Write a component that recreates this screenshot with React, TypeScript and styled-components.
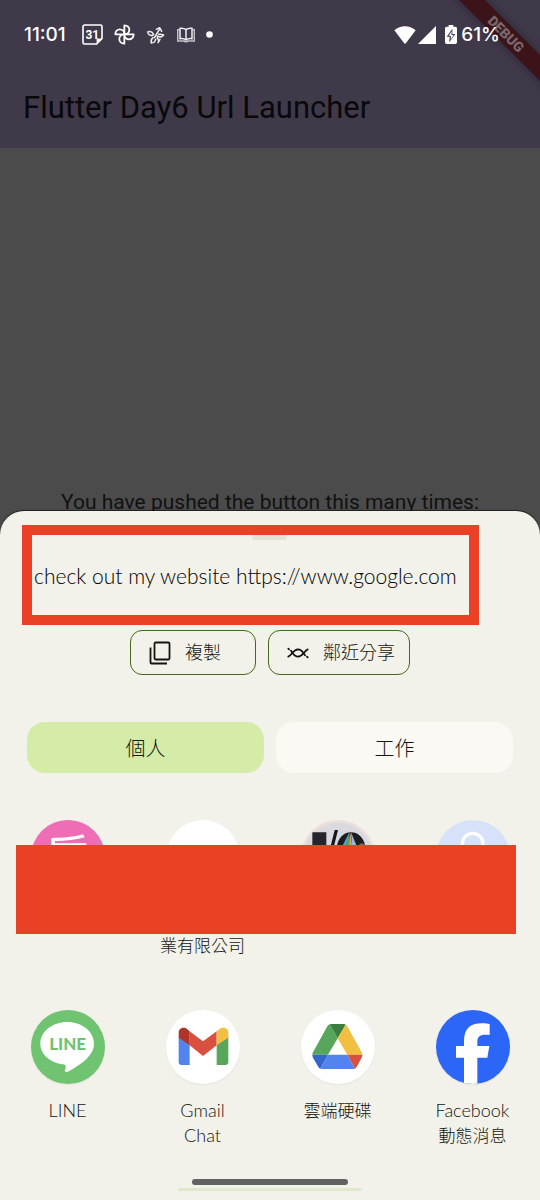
import React from "react";
import styled, { createGlobalStyle } from "styled-components";

const GlobalStyle = createGlobalStyle`
  * { box-sizing: border-box; }
  body {
    margin: 0;
    background: #f2f1ea;
    font-family: Lato, "Noto Sans CJK TC", sans-serif;
    color: #14150f;
  }
  button { font: inherit; color: inherit; border: 0; padding: 0; background: none; cursor: pointer; }
  svg { display: block; flex: none; }
`;

const RED = "#ea4026";

const Screen = styled.main`
  position: relative;
  display: flex;
  flex-direction: column;
  min-height: 100vh;
  overflow: hidden;
  background: #4b4b4b;
`;

const AppHeader = styled.header`
  background: #403949;
  padding-bottom: 21px;
  border-bottom: 1px solid #4b484e;
`;

const StatusBar = styled.div`
  position: relative;
  z-index: 2;
  display: flex;
  align-items: center;
  justify-content: space-between;
  height: 69px;
  padding: 0 40px 0 24px;
  color: #fff;
  font: 500 19px/24px Inter, sans-serif;
`;

const StatusGroup = styled.div<{ $gap: number }>`
  display: flex;
  align-items: center;
  gap: ${(p) => p.$gap}px;
`;

const Clock = styled.time`
  margin-right: 5px;
`;

const Title = styled.h1`
  margin: 0;
  padding: 19px 23px 0;
  font: 400 31px/39px Roboto, sans-serif;
  color: #09080a;
`;

const BannerCorner = styled.div`
  position: absolute;
  z-index: 1;
  top: 0;
  right: 0;
  width: 110px;
  height: 110px;
  overflow: hidden;
`;

const Banner = styled.div`
  position: absolute;
  top: 25px;
  right: -46px;
  width: 160px;
  height: 18px;
  transform: rotate(45deg);
  background: #3b1318;
  box-shadow: 0 0 10px rgba(20, 18, 40, 0.5);
  color: #77696b;
  font: 900 14px/18px Roboto, sans-serif;
  text-align: center;
`;

const AppBody = styled.section`
  display: flex;
  flex-direction: column;
  justify-content: flex-end;
  height: 387px;
  padding-bottom: 22px;
`;

const Counter = styled.p`
  margin: 0;
  text-align: center;
  white-space: nowrap;
  font: 400 21px/24px Roboto, sans-serif;
  color: #111;
`;

const Sheet = styled.section`
  position: relative;
  flex: 1;
  margin-top: -25px;
  padding-top: 14px;
  border-radius: 24px 24px 0 0;
  background: #f2f1ea;
  box-shadow: 0 -1px 1px rgba(0, 0, 0, 0.6);
  display: flex;
  flex-direction: column;
`;

const Handle = styled.div`
  position: absolute;
  top: 23px;
  left: 50%;
  width: 35px;
  height: 6px;
  margin-left: -18px;
  border-radius: 3px;
  background: #e3e4d6;
`;

const Message = styled.div`
  position: relative;
  display: flex;
  align-items: center;
  height: 100px;
  margin: 0 61px 0 22px;
  padding: 2px 0 0 2px;
  border: 10px solid ${RED};
  font-size: 21px;
  font-weight: 300;
  line-height: 26px;
  white-space: nowrap;
  color: #000;
`;

const Actions = styled.div`
  display: flex;
  justify-content: center;
  gap: 12px;
  margin-top: 5px;
`;

const ActionButton = styled.button`
  && {
    display: flex;
    align-items: center;
    gap: 14px;
    min-width: 126px;
    height: 45px;
    padding: 0 14px 0 18px;
    border: 1px solid #46661b;
    border-radius: 12px;
    font-size: 18px;
    line-height: 24px;
    font-weight: 300;
  }
`;

const ActionLabel = styled.span`
  padding-bottom: 2px;
`;

const Tabs = styled.div`
  display: grid;
  grid-template-columns: 1fr 1fr;
  gap: 12px;
  margin: 47px 27px 0;
`;

const Tab = styled.button<{ $active?: boolean }>`
  && {
    height: 51px;
    border-radius: 18px;
    background: ${(p) => (p.$active ? "#d5eca8" : "#faf9f4")};
    font-size: 20px;
    font-weight: 300;
  }
`;

const AppGrid = styled.div`
  position: relative;
  display: grid;
  grid-template-columns: repeat(4, 1fr);
  row-gap: 50px;
  margin-top: 47px;
`;

const AppButton = styled.button`
  && {
    display: flex;
    flex-direction: column;
    align-items: center;
    font-size: 17px;
    line-height: 25px;
    font-weight: 300;
    min-height: 140px;
  }
`;

const AppIcon = styled.span<{ $bg: string }>`
  width: 74px;
  height: 74px;
  margin-bottom: 14px;
  border-radius: 50%;
  overflow: hidden;
  background: ${(p) => p.$bg};
  box-shadow: 0 1px 2px rgba(0, 0, 0, 0.06);
`;

const AppName = styled.span`
  min-height: 25px;
  font-size: 18px;
`;

const CjkName = styled.span`
  min-height: 25px;
`;

const Redaction = styled.div`
  position: absolute;
  top: 25px;
  left: 16px;
  right: 24px;
  height: 89px;
  background: ${RED};
`;

const NavArea = styled.footer`
  display: flex;
  flex-direction: column;
  align-items: center;
  gap: 3px;
  margin-top: auto;
  padding-bottom: 9px;
`;

const NavPill = styled.div`
  width: 156px;
  height: 6px;
  border-radius: 3px;
  background: #636161;
`;

const NavLine = styled.div`
  width: 184px;
  height: 3px;
  border-radius: 2px;
  background: #e0e7cb;
`;

const CalendarIcon = () => (
  <svg width="21" height="21" viewBox="0 0 21 21" fill="none" stroke="#fff" strokeWidth="1.6">
    <path d="M2.6 1h15.8A1.6 1.6 0 0 1 20 2.6v12L14.6 20H2.6A1.6 1.6 0 0 1 1 18.4V2.600A1.600 1.600 0 0 1 2.600 1Z" />
    <path d="M20 14.600h-5.400V20Z" fill="#fff" stroke="none" />
    <text x="10.300" y="14.800" textAnchor="middle" fill="#fff" stroke="none" fontSize="12" fontWeight="700" fontFamily="Roboto, sans-serif">31</text>
  </svg>
);

const PhotosIcon = () => (
  <svg width="21" height="21" viewBox="0 0 63 63" fill="none" stroke="#fff" strokeWidth="5.500" strokeLinejoin="round">
    <path d="M31 31V4c20 0 20 27 0 27ZM31 31h28c0 20-28 20-28 0ZM31 31v28c-20 0-20-28 0-28ZM31 31H4c0-20 27-20 27 0Z" />
  </svg>
);

const SproutIcon = () => (
  <svg width="20" height="20" viewBox="0 0 60 60" fill="none" stroke="#eee" strokeWidth="4.500" strokeLinecap="round" strokeLinejoin="round">
    <path d="M25 38 41 12M31 13l10-5 6 11" />
    <path d="M5 21c7-3 14 0 18 7M5 21c1 8 8 12 16 10M38 28c6-1 10 0 15 2M53 30c-5 7-12 7-20 3" />
    <path d="M21 38c-5 4-7 9-5 16 8 0 12-5 13-12M34 38l5 11M42 43l-6 10" />
  </svg>
);

const BookIcon = () => (
  <svg width="18" height="16" viewBox="0 0 54 48" fill="none" stroke="#c4c1c9" strokeWidth="4.500">
    <path d="M7 8H2v34h20c1 3 9 3 10 0h20V8h-5" />
    <path d="M27 8C22 4 16 3 9 4v31c8-1 13 0 18 4 5-4 10-5 18-4V4c-7-1-13 0-18 4v31" stroke="#efeef0" />
  </svg>
);

const DotIcon = () => (
  <svg width="7" height="7" viewBox="0 0 7 7"><circle cx="3.500" cy="3.500" r="3.300" fill="#fff" /></svg>
);

const WifiIcon = () => (
  <svg width="22" height="18" viewBox="0 0 66 54" fill="#fff">
    <path d="M1 13C20-3 46-3 65 13L36 51q-3 4-6 0Z" />
  </svg>
);

const SignalIcon = () => (
  <svg width="18" height="18" viewBox="0 0 18 18" fill="#fff"><path d="M18 0v18H0Z" /></svg>
);

const BatteryIcon = () => (
  <svg width="12" height="19" viewBox="0 0 36 57">
    <path d="M11 0h14v5h6q5 0 5 5v42q0 5-5 5H5q-5 0-5-5V10q0-5 5-5h6Z" fill="#fff" />
    <path d="M22 11 5 35h9l-1 17 18-25h-9Z" fill="#403949" />
    <path d="M20 19 11 32h7l-1 12 9-14h-7Z" fill="#fff" />
  </svg>
);

const CopyIcon = () => (
  <svg width="22" height="24" viewBox="0 0 22 24" fill="none" stroke="#14150f" strokeWidth="1.800" strokeLinejoin="round">
    <rect x="5.500" y="1.500" width="15" height="17" rx="1.200" />
    <path d="M1.500 6.500v15a1 1 0 0 0 1 1h15.500" />
  </svg>
);

const NearbyIcon = () => (
  <svg width="22" height="12" viewBox="0 0 66 36" fill="none" stroke="#14150f" strokeWidth="5.500" strokeLinecap="round">
    <path d="M4 29C14 25 18 8 33 7c12 0 16 11 21 18M60 29l2 2" />
    <path d="M62 7C52 11 48 28 33 29c-12 0-16-11-21-18M4 5l2 2" />
  </svg>
);

const TrainLogo = () => (
  <svg width="74" height="74" viewBox="0 0 222 222" fill="#fff">
    <path d="M61 54C98 54 128 51 156 43l5 9c-28 8-56 11-89 11v7h94v10H61Z" />
  </svg>
);

const IoLogo = () => (
  <svg width="74" height="74" viewBox="0 0 222 222">
    <circle cx="111" cy="112" r="107" fill="#d9d9df" stroke="#ecdfdb" strokeWidth="6" />
    <path d="M34 37h42v90H34Z" fill="#25262c" />
    <path d="M101 30h10L91 110H81Z" fill="#151519" />
    <ellipse cx="150" cy="83" rx="42" ry="46" fill="#1c1d21" />
    <path d="M145 37 118 90h18Z" fill="#5e9bd6" />
    <path d="M146 37 129 90h18Z" fill="#55a063" />
    <path d="M148 37 143 90h12Z" fill="#d8a35d" />
    <path d="M150 37 154 90h18Z" fill="#8db9e8" />
    <path d="M176 72q12-8 18 10H172Z" fill="#9b5d4b" />
  </svg>
);

const PersonLogo = () => (
  <svg width="74" height="74" viewBox="0 0 222 222" fill="none" stroke="#fff" strokeWidth="10">
    <circle cx="110" cy="71" r="31" />
  </svg>
);

const LineLogo = () => (
  <svg width="74" height="74" viewBox="0 0 222 222">
    <path d="M109 36C64 36 28 65 28 101c0 33 30 57 68 62 8 1 9 4 8 10l-2 8c-1 6 3 6 8 4 32-17 79-45 79-84 0-36-36-65-80-65Z" fill="#fff" />
    <text x="110" y="120" textAnchor="middle" fontFamily="Lato, sans-serif" fontSize="51" fontWeight="900" fill="#70c371">LINE</text>
  </svg>
);

const GmailLogo = () => (
  <svg width="74" height="74" viewBox="0 0 222 222">
    <path d="M38 80 71 104v61H47q-9 0-9-9Z" fill="#5383ec" />
    <path d="M187 80 152 104v61h26q9 0 9-9Z" fill="#58a65c" />
    <path d="M71 64 111 94 152 64v42L111 138 71 106Z" fill="#d95040" />
    <path d="M38 83V68c0-14 16-19 26-10l7 6v42Z" fill="#b03428" />
    <path d="M187 83V68c0-14-16-19-27-10l-8 6v42Z" fill="#f1bf42" />
  </svg>
);

const DriveLogo = () => (
  <svg width="74" height="74" viewBox="0 0 222 222">
    <path d="M86 43 110 85 81 134H34q0-4 2-7L79 49q3-5 7-6Z" fill="#58a65c" />
    <path d="M86 43q2-1 6-1h36q4 0 6 2L110 85Z" fill="#3b7e40" />
    <path d="M134 44q3 2 5 5l43 78q2 3 2 7h-45L110 85Z" fill="#f1bf42" />
    <path d="M34 134h47L58 176q-4-1-6-5L36 143q-2-4-2-9Z" fill="#3267cb" />
    <path d="M81 134h58l23 42q-3 1-6 1H64q-3 0-6-1Z" fill="#5383ec" />
    <path d="M139 134h45q0 5-2 9l-15 28q-2 4-5 5Z" fill="#d95040" />
  </svg>
);

const FacebookLogo = () => (
  <svg width="74" height="74" viewBox="0 0 222 222">
    <path d="M84 222V143H60v-35h24V94c0-38 18-54 54-54 9 0 18 1 23 3v32c-4-1-9-1-14-1-16 0-23 6-23 22v12h36l-6 35h-30v79Z" fill="#fff" />
  </svg>
);

type Line = { text: string; cjk?: boolean };
const apps: { id: string; bg: string; logo?: React.ReactNode; lines: Line[] }[] = [
  { id: "news", bg: "#ee6db4", logo: <TrainLogo />, lines: [] },
  { id: "company", bg: "#fff", lines: [{ text: "" }, { text: "業有限公司", cjk: true }] },
  { id: "io", bg: "#ecdfdb", logo: <IoLogo />, lines: [] },
  { id: "person", bg: "#d8e1fa", logo: <PersonLogo />, lines: [] },
  { id: "line", bg: "#70c371", logo: <LineLogo />, lines: [{ text: "LINE" }] },
  { id: "gmail", bg: "#fff", logo: <GmailLogo />, lines: [{ text: "Gmail" }, { text: "Chat" }] },
  { id: "drive", bg: "#fff", logo: <DriveLogo />, lines: [{ text: "雲端硬碟", cjk: true }] },
  { id: "facebook", bg: "#2c66f6", logo: <FacebookLogo />, lines: [{ text: "Facebook" }, { text: "動態消息", cjk: true }] },
];

export default function App() {
  return (
    <>
      <GlobalStyle />
      <Screen>
        <AppHeader>
          <StatusBar>
            <StatusGroup $gap={11}>
              <Clock>11:01</Clock>
              <CalendarIcon />
              <PhotosIcon />
              <SproutIcon />
              <BookIcon />
              <DotIcon />
            </StatusGroup>
            <StatusGroup $gap={9}>
              <StatusGroup $gap={2}>
                <WifiIcon />
                <SignalIcon />
              </StatusGroup>
              <StatusGroup $gap={4}>
                <BatteryIcon />
                <span>61%</span>
              </StatusGroup>
            </StatusGroup>
          </StatusBar>
          <Title>Flutter Day6 Url Launcher</Title>
        </AppHeader>
        <BannerCorner>
          <Banner>DEBUG</Banner>
        </BannerCorner>
        <AppBody>
          <Counter>You have pushed the button this many times:</Counter>
        </AppBody>
        <Sheet>
          <Handle />
          <Message>check out my website https://www.google.com</Message>
          <Actions>
            <ActionButton type="button"><CopyIcon /><ActionLabel>複製</ActionLabel></ActionButton>
            <ActionButton type="button"><NearbyIcon /><ActionLabel>鄰近分享</ActionLabel></ActionButton>
          </Actions>
          <Tabs role="tablist">
            <Tab type="button" role="tab" aria-selected="true" $active>個人</Tab>
            <Tab type="button" role="tab" aria-selected="false">工作</Tab>
          </Tabs>
          <AppGrid>
            {apps.map((app) => (
              <AppButton type="button" key={app.id}>
                <AppIcon $bg={app.bg}>{app.logo}</AppIcon>
                {app.lines.map((line, i) =>
                  line.cjk ? <CjkName key={i}>{line.text}</CjkName> : <AppName key={i}>{line.text}</AppName>
                )}
              </AppButton>
            ))}
            <Redaction />
          </AppGrid>
          <NavArea>
            <NavPill />
            <NavLine />
          </NavArea>
        </Sheet>
      </Screen>
    </>
  );
}
